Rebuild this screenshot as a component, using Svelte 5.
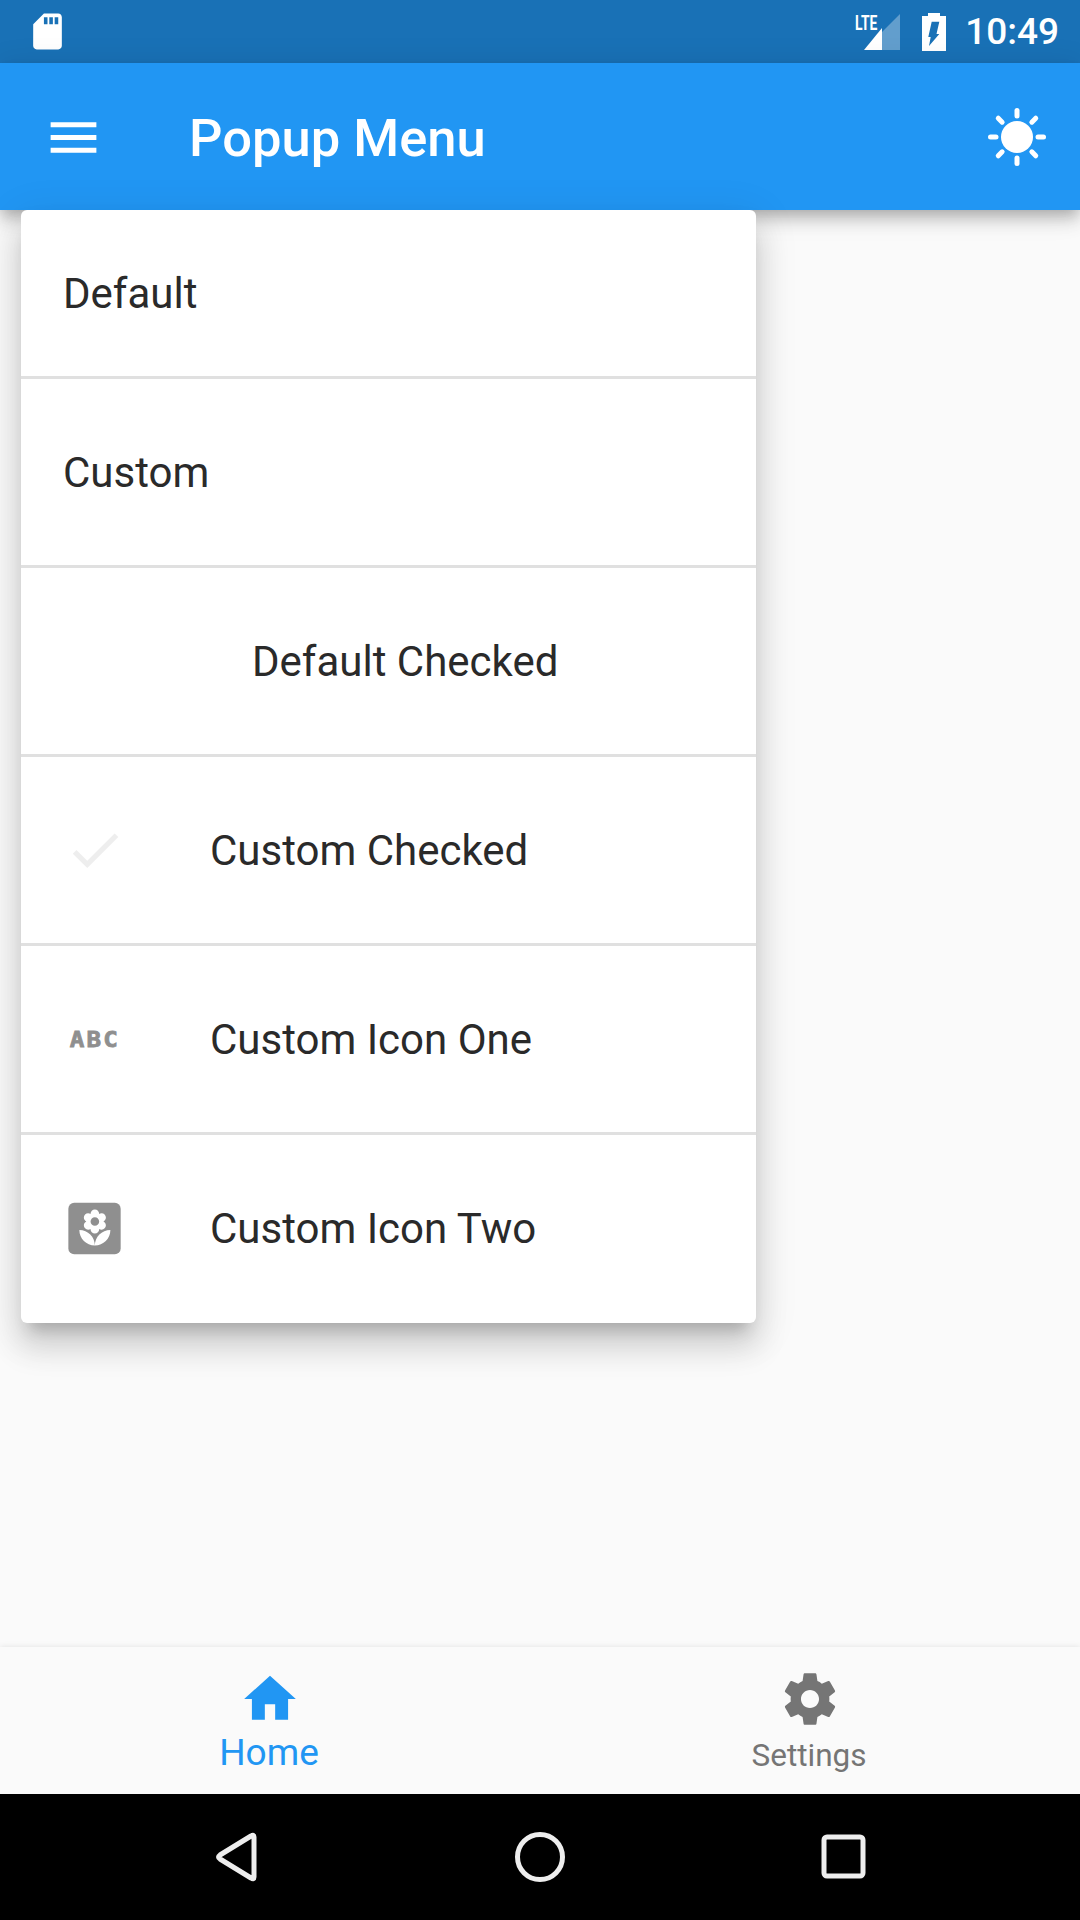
<script>
  const menu = [
    { label: 'Default', kind: 'none', first: true },
    { label: 'Custom', kind: 'none' },
    { label: 'Default Checked', kind: 'blank' },
    { label: 'Custom Checked', kind: 'check' },
    { label: 'Custom Icon One', kind: 'abc' },
    { label: 'Custom Icon Two', kind: 'flower', last: true }
  ];
  const rays = [0, 45, 90, 135, 180, 225, 270, 315];
</script>

<div class="screen">
  <div class="status">
    <svg class="sd" viewBox="0 0 24 24"><path fill="#fff" d="M18 2h-8L4.02 8 4 20c0 1.1.9 2 2 2h12c1.1 0 2-.9 2-2V4c0-1.1-.9-2-2-2zm-6 6h-2V4h2v4zm3 0h-2V4h2v4zm3 0h-2V4h2v4z"/></svg>
    <div class="status-right">
      <div class="lte">
        <svg width="48" height="38" viewBox="0 0 48 38">
          <path fill="#fff" fill-opacity="0.32" d="M48 1v36H30V19z"/>
          <path fill="#fff" d="M30 15v22H12z"/>
        </svg>
        <span class="lte-text">LTE</span>
      </div>
      <svg class="batt" width="24" height="38" viewBox="0 0 24 38">
        <path fill="#fff" fill-rule="evenodd" d="M6 0h12v3h6v35H0V3h6zM9.7 8.7h7.6L14.5 21h2.8L7 33l1.7-9H6.3z"/>
      </svg>
      <span class="time">10:49</span>
    </div>
  </div>

  <header class="appbar">
    <svg class="burger" viewBox="0 0 24 24"><path fill="#fff" d="M3 18h18v-2H3v2zm0-5h18v-2H3v2zm0-5h18V6H3v2z"/></svg>
    <span class="title">Popup Menu</span>
    <svg class="sun" viewBox="-32 -32 64 64">
      <circle r="16" fill="#fff"/>
      {#each rays as r}
        <line x1="0" y1="-21" x2="0" y2="-26.5" transform="rotate({r})" stroke="#fff" stroke-width="5" stroke-linecap="round"/>
      {/each}
    </svg>
  </header>

  <main class="body">
    <div class="menu">
      {#each menu as item}
        <div class="row {item.kind}" class:first={item.first} class:last={item.last}>
          {#if item.kind === 'check'}
            <svg class="lead" viewBox="0 0 24 24"><path fill="#eee" d="M9 16.17L4.83 12l-1.41 1.41L9 19 21 7l-1.41-1.41z"/></svg>
          {:else if item.kind === 'abc'}
            <span class="lead abc-mark"><span>ABC</span></span>
          {:else if item.kind === 'flower'}
            <svg class="lead" viewBox="0 0 64 64">
              <rect x="4.5" y="5" width="54" height="53" rx="6" fill="#8f8f8f"/>
              <g transform="translate(10.5 10) scale(1.78)">
                <path fill="#fff" d="M12 22c4.97 0 9-4.03 9-9-4.97 0-9 4.03-9 9zM5.6 10.25c0 1.38 1.12 2.5 2.5 2.5.53 0 1.01-.16 1.42-.44l-.02.19c0 1.38 1.12 2.5 2.5 2.5s2.5-1.12 2.5-2.5l-.02-.19c.4.28.89.44 1.42.44 1.38 0 2.5-1.12 2.5-2.5 0-1-.59-1.85-1.43-2.25.84-.4 1.43-1.25 1.43-2.25 0-1.38-1.12-2.5-2.5-2.5-.53 0-1.01.16-1.42.44l.02-.19C14.5 2.12 13.38 1 12 1S9.5 2.12 9.5 3.5l.02.19c-.4-.28-.89-.44-1.42-.44-1.38 0-2.5 1.12-2.5 2.5 0 1 .59 1.85 1.43 2.25-.84.4-1.43 1.25-1.43 2.25zM12 5.5c1.38 0 2.5 1.12 2.5 2.5s-1.12 2.5-2.5 2.5S9.5 9.38 9.5 8s1.12-2.5 2.5-2.5zM3 13c0 4.97 4.03 9 9 9 0-4.97-4.03-9-9-9z"/>
              </g>
            </svg>
          {/if}
          <span class="label">{item.label}</span>
        </div>
      {/each}
    </div>
  </main>

  <nav class="tabs">
    <div class="tab on">
      <svg viewBox="0 0 24 24"><path fill="#2196f3" d="M10 20v-6h4v6h5v-8h3L12 3 2 12h3v8z"/></svg>
      <span>Home</span>
    </div>
    <div class="tab">
      <svg viewBox="0 0 24 24"><path fill="#757575" d="M19.43 12.98c.04-.32.07-.64.07-.98s-.03-.66-.07-.98l2.11-1.65c.19-.15.24-.42.12-.64l-2-3.46c-.12-.22-.39-.3-.61-.22l-2.49 1c-.52-.4-1.08-.73-1.69-.98l-.38-2.65C14.46 2.18 14.25 2 14 2h-4c-.25 0-.46.18-.49.42l-.38 2.65c-.61.25-1.17.59-1.69.98l-2.49-1c-.23-.09-.49 0-.61.22l-2 3.46c-.13.22-.07.49.12.64l2.11 1.65c-.04.32-.07.65-.07.98s.03.66.07.98l-2.11 1.65c-.19.15-.24.42-.12.64l2 3.46c.12.22.39.3.61.22l2.49-1c.52.4 1.08.73 1.69.98l.38 2.65c.03.24.24.42.49.42h4c.25 0 .46-.18.49-.42l.38-2.65c.61-.25 1.17-.59 1.69-.98l2.49 1c.23.09.49 0 .61-.22l2-3.46c.12-.22.07-.49-.12-.64l-2.11-1.65zM12 15.5c-1.93 0-3.5-1.57-3.5-3.5s1.57-3.5 3.5-3.5 3.5 1.57 3.5 3.5-1.57 3.5-3.5 3.5z"/></svg>
      <span>Settings</span>
    </div>
  </nav>

  <div class="sysnav">
    <svg width="48" height="56" viewBox="0 0 48 56"><path fill="none" stroke="#eee" stroke-width="5" stroke-linejoin="round" d="M42 8v40q0 3-3 1L8 30q-3-2 0-4L39 7q3-2 3 1z"/></svg>
    <svg width="56" height="56" viewBox="0 0 56 56"><circle cx="28" cy="28" r="22.5" fill="none" stroke="#eee" stroke-width="5"/></svg>
    <svg width="50" height="50" viewBox="0 0 50 50"><rect x="5" y="5" width="39" height="39" rx="3" fill="none" stroke="#eee" stroke-width="5"/></svg>
  </div>
</div>

<style>
  :global(body) {
    margin: 0;
    background: #fafafa;
  }

  .screen {
    width: 1080px;
    height: 1920px;
    display: flex;
    flex-direction: column;
    overflow: hidden;
    font-family: Roboto, "Liberation Sans", sans-serif;
  }

  /* status bar */
  .status {
    height: 63px;
    flex: none;
    background: #1971b6;
    display: flex;
    align-items: center;
    justify-content: space-between;
    padding: 0 21px 0 26px;
  }
  .sd {
    width: 43px;
    height: 43px;
  }
  .status-right {
    display: flex;
    align-items: center;
  }
  .lte {
    position: relative;
    width: 48px;
    height: 38px;
    margin-right: 22px;
  }
  .lte svg {
    display: block;
  }
  .lte-text {
    position: absolute;
    left: 3px;
    top: 0;
    font-size: 21px;
    line-height: 20px;
    font-weight: 700;
    color: #fff;
    transform: scaleX(0.66);
    transform-origin: left center;
  }
  .time {
    margin-left: 19px;
    color: #fff;
    font-size: 37px;
    font-weight: 500;
    line-height: 1;
  }

  /* app bar */
  .appbar {
    height: 147px;
    flex: none;
    background: #2196f3;
    display: flex;
    align-items: center;
    padding: 2px 31px 0 43px;
    box-sizing: border-box;
    position: relative;
    z-index: 1;
    box-shadow: 0 6px 12px -3px rgba(0,0,0,.18), 0 12px 15px 0 rgba(0,0,0,.12), 0 3px 30px 0 rgba(0,0,0,.1);
  }
  .burger {
    width: 61px;
    height: 61px;
  }
  .title {
    margin-left: 85px;
    color: #fff;
    font-size: 52.5px;
    font-weight: 500;
    flex: 1;
  }
  .sun {
    width: 64px;
    height: 64px;
    margin-top: -2px;
  }

  /* popup menu */
  .body {
    flex: 1;
    min-height: 0;
    padding-left: 21px;
    position: relative;
    z-index: 2;
  }
  .menu {
    width: 735px;
    background: #fff;
    border-radius: 6px;
    box-shadow: 0 15px 15px -9px rgba(0,0,0,.2), 0 24px 30px 3px rgba(0,0,0,.12), 0 9px 42px 6px rgba(0,0,0,.08);
  }
  .row {
    height: 189px;
    box-sizing: border-box;
    border-bottom: 3px solid #e0e0e0;
    display: flex;
    align-items: center;
    padding-left: 43px;
    font-size: 42px;
    color: #2a2a2a;
  }
  .row.first {
    height: 169px;
  }
  .row.last {
    height: 188px;
    padding-bottom: 1px;
    border-bottom: 0;
  }
  .row.none {
    padding-left: 42px;
  }
  .row.blank {
    padding-left: 231px;
  }
  .lead {
    width: 62px;
    height: 62px;
    flex: none;
  }
  .abc-mark {
    display: flex;
    align-items: center;
    justify-content: center;
    font-family: "DejaVu Sans Mono", monospace;
    font-weight: 700;
    font-size: 22px;
    letter-spacing: 2px;
    -webkit-text-stroke: 0.8px #8f8f8f;
    color: #8f8f8f;
  }
  .abc-mark span {
    transform: scaleX(1.1);
  }
  .label {
    margin-left: 84px;
  }
  .row.none .label,
  .row.blank .label {
    margin-left: 0;
  }

  /* bottom navigation */
  .tabs {
    height: 147px;
    flex: none;
    background: #fafafa;
    display: flex;
    position: relative;
    z-index: 1;
    box-shadow: 0 0 6px rgba(0,0,0,.1);
  }
  .tab {
    flex: 1;
    display: flex;
    flex-direction: column;
    align-items: center;
    padding-top: 21px;
    color: #757575;
    font-size: 31.5px;
    line-height: 34px;
  }
  .tab svg {
    width: 62px;
    height: 62px;
  }
  .tab span {
    margin-top: 9px;
    margin-right: 2px;
  }
  .tab.on {
    color: #2196f3;
    font-size: 37px;
    line-height: 40px;
  }
  .tab.on span {
    margin-top: 3px;
    margin-right: 2px;
  }

  /* system nav */
  .sysnav {
    height: 126px;
    flex: none;
    background: #000;
    display: flex;
    align-items: center;
    justify-content: space-between;
    padding: 0 211px 0 212px;
    position: relative;
    z-index: 1;
  }
</style>
